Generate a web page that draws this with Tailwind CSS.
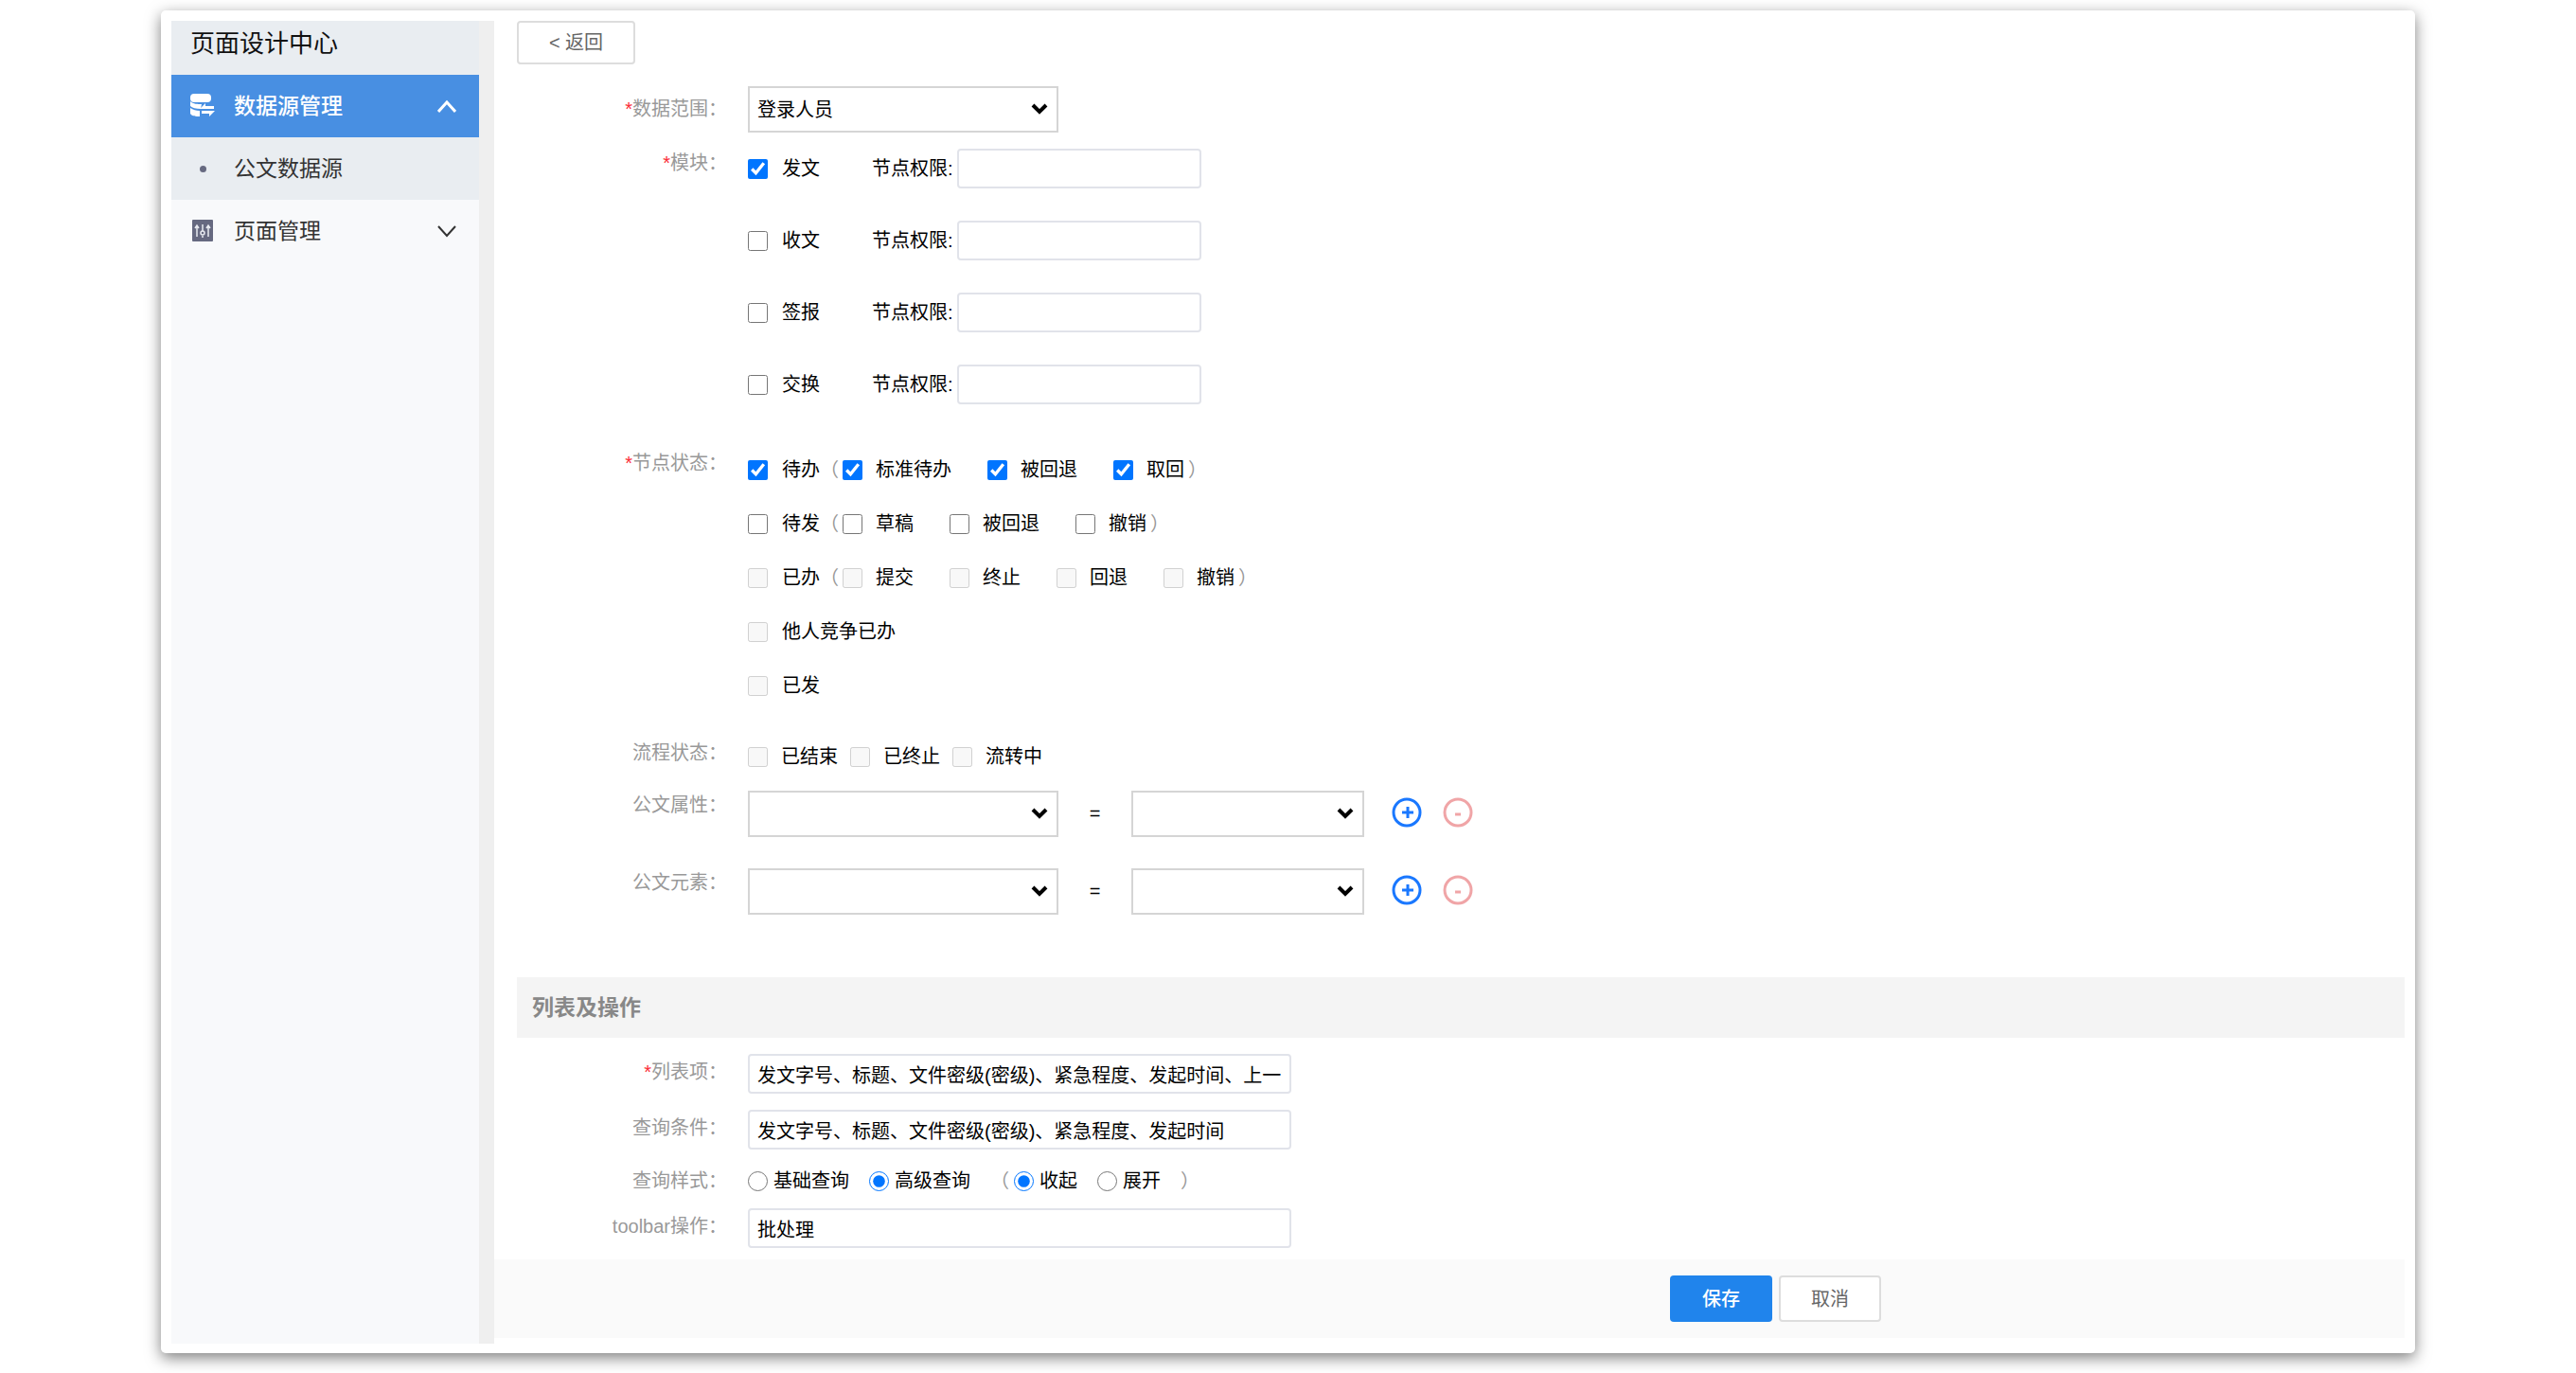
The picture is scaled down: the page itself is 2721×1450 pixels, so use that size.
<!DOCTYPE html>
<html lang="zh-CN">
<head>
    <meta charset="UTF-8">
    <meta name="viewport" content="width=device-width, initial-scale=1.0">
    <title>页面设计中心</title>
    <script src="https://cdn.jsdelivr.net/npm/@tailwindcss/browser@4"></script>
</head>
<body class="bg-white px-[170px] pt-[11px] pb-[21px] font-['Liberation_Sans','Noto_Sans_CJK_SC',sans-serif] text-[20px] leading-[30px] text-black">
    <div class="flex rounded-[5px] bg-white pt-[11px] pr-[11px] pb-[10px] pl-[11px] shadow-[0_5px_16px_rgba(0,0,0,0.5)]">

        <!-- Sidebar -->
        <aside class="w-[341px] shrink-0 border-r-[16px] border-[#efefef] bg-[#f8f9fb] text-[23px] text-[#333]">
            <h1 class="h-[57px] bg-[#e9edf1] pl-5 text-[26px] leading-[48px] text-[#111]">页面设计中心</h1>
            <nav>
                <button type="button" class="flex h-[66px] w-full items-center bg-[#488fe2] pr-6 pl-5 text-white">
                    <svg class="h-[26px] w-[26px]" viewBox="0 0 26 26" fill="currentColor">
                        <rect x="0" y="0" width="22" height="9" rx="4" />
                        <path d="M0 8c3 3 8 3 12 3l-1 5C6 16 2 15 0 13z" />
                        <path d="M0 15c3 2 6 3 10 3v6C6 24 2 24 0 21z" />
                        <path d="M11 15l5-5v3h9v3H11zM12 18h14l-6 6v-3h-8z" />
                    </svg>
                    <span class="ml-5 font-medium">数据源管理</span>
                    <svg class="ml-auto h-[20px] w-[20px]" viewBox="0 0 20 20" fill="none" stroke="currentColor" stroke-width="3">
                        <path d="M1 16l9-10 9 10" />
                    </svg>
                </button>
                <a href="#" class="flex h-[66px] items-center bg-[#e9edf1] pl-[30px]">
                    <span class="h-[7px] w-[7px] rounded-full bg-[#666980]"></span>
                    <span class="ml-[29px]">公文数据源</span>
                </a>
                <button type="button" class="flex h-[66px] w-full items-center pr-6 pl-5">
                    <svg class="h-[26px] w-[26px]" viewBox="0 0 26 26">
                        <rect x="2" y="1" width="22" height="23" rx="1" fill="#666980" />
                        <path d="M7 19V7M5 10l2-3 2 3M13 6v7M13 18v2M19 19V7M17 10l2-3 2 3" fill="none" stroke="#e8eaf0" stroke-width="1.5" />
                        <circle cx="13" cy="15" r="2" fill="none" stroke="#e8eaf0" stroke-width="1.5" />
                    </svg>
                    <span class="ml-5">页面管理</span>
                    <svg class="ml-auto h-[20px] w-[20px]" viewBox="0 0 20 20" fill="none" stroke="currentColor" stroke-width="2">
                        <path d="M1 5l9 10 9-10" />
                    </svg>
                </button>
            </nav>
        </aside>

        <form class="min-w-0 grow">
            <div class="pl-6">
                <button type="button" class="block h-[46px] w-[125px] rounded border-2 border-[#ddd] text-[#666]">&lt; 返回</button>

                <div class="mt-[23px] flex">
                    <label for="scope" class="mr-[22px] w-[222px] pt-[9px] text-right text-[#999]"><span class="text-red-500">*</span>数据范围：</label>
                    <div class="relative">
                        <select id="scope" class="block h-[49px] w-[328px] appearance-none border-2 border-[#d5d5d5] bg-white px-2">
                            <option>登录人员</option>
                        </select>
                        <svg class="pointer-events-none absolute top-[18px] right-[11px] h-[12px] w-[18px]" viewBox="0 0 18 12" fill="none" stroke="#000" stroke-width="4"><path d="M2 2l7 7 7-7" /></svg>
                    </div>
                </div>

                <div class="mt-[17px] flex">
                    <div class="mr-[22px] w-[222px] text-right text-[#999]"><span class="text-red-500">*</span>模块：</div>
                    <div class="flex flex-col gap-[34px]">
                        <div class="flex h-[42px] items-center">
                            <label class="flex items-center gap-[15px]"><input type="checkbox" checked class="h-[21px] w-[21px]">发文</label>
                            <label for="perm1" class="mr-1 ml-[55px]">节点权限:</label>
                            <input id="perm1" type="text" class="h-[42px] w-[258px] rounded border-2 border-[#e1e3ea] px-2">
                        </div>
                        <div class="flex h-[42px] items-center">
                            <label class="flex items-center gap-[15px]"><input type="checkbox" class="h-[21px] w-[21px]">收文</label>
                            <label for="perm2" class="mr-1 ml-[55px]">节点权限:</label>
                            <input id="perm2" type="text" class="h-[42px] w-[258px] rounded border-2 border-[#e1e3ea] px-2">
                        </div>
                        <div class="flex h-[42px] items-center">
                            <label class="flex items-center gap-[15px]"><input type="checkbox" class="h-[21px] w-[21px]">签报</label>
                            <label for="perm3" class="mr-1 ml-[55px]">节点权限:</label>
                            <input id="perm3" type="text" class="h-[42px] w-[258px] rounded border-2 border-[#e1e3ea] px-2">
                        </div>
                        <div class="flex h-[42px] items-center">
                            <label class="flex items-center gap-[15px]"><input type="checkbox" class="h-[21px] w-[21px]">交换</label>
                            <label for="perm4" class="mr-1 ml-[55px]">节点权限:</label>
                            <input id="perm4" type="text" class="h-[42px] w-[258px] rounded border-2 border-[#e1e3ea] px-2">
                        </div>
                    </div>
                </div>

                <div class="mt-[47px] flex">
                    <div class="mr-[22px] w-[222px] text-right text-[#999]"><span class="text-red-500">*</span>节点状态：</div>
                    <div class="flex flex-col gap-[27px] pt-[7px]">
                        <div class="flex items-center">
                            <label class="flex items-center gap-[15px]"><input type="checkbox" checked class="h-[21px] w-[21px]">待办</label>
                            <span class="mr-1 text-[#999]">（</span>
                            <div class="flex gap-[38px]">
                                <label class="flex items-center gap-[14px]"><input type="checkbox" checked class="h-[21px] w-[21px]">标准待办</label>
                                <label class="flex items-center gap-[14px]"><input type="checkbox" checked class="h-[21px] w-[21px]">被回退</label>
                                <label class="flex items-center gap-[14px]"><input type="checkbox" checked class="h-[21px] w-[21px]">取回</label>
                            </div>
                            <span class="ml-1 text-[#999]">）</span>
                        </div>
                        <div class="flex items-center">
                            <label class="flex items-center gap-[15px]"><input type="checkbox" class="h-[21px] w-[21px]">待发</label>
                            <span class="mr-1 text-[#999]">（</span>
                            <div class="flex gap-[38px]">
                                <label class="flex items-center gap-[14px]"><input type="checkbox" class="h-[21px] w-[21px]">草稿</label>
                                <label class="flex items-center gap-[14px]"><input type="checkbox" class="h-[21px] w-[21px]">被回退</label>
                                <label class="flex items-center gap-[14px]"><input type="checkbox" class="h-[21px] w-[21px]">撤销</label>
                            </div>
                            <span class="ml-1 text-[#999]">）</span>
                        </div>
                        <div class="flex items-center">
                            <label class="flex items-center gap-[15px]"><input type="checkbox" disabled class="h-[21px] w-[21px]">已办</label>
                            <span class="mr-1 text-[#999]">（</span>
                            <div class="flex gap-[38px]">
                                <label class="flex items-center gap-[14px]"><input type="checkbox" disabled class="h-[21px] w-[21px]">提交</label>
                                <label class="flex items-center gap-[14px]"><input type="checkbox" disabled class="h-[21px] w-[21px]">终止</label>
                                <label class="flex items-center gap-[14px]"><input type="checkbox" disabled class="h-[21px] w-[21px]">回退</label>
                                <label class="flex items-center gap-[14px]"><input type="checkbox" disabled class="h-[21px] w-[21px]">撤销</label>
                            </div>
                            <span class="ml-1 text-[#999]">）</span>
                        </div>
                        <label class="flex items-center gap-[15px]"><input type="checkbox" disabled class="h-[21px] w-[21px]">他人竞争已办</label>
                        <label class="flex items-center gap-[15px]"><input type="checkbox" disabled class="h-[21px] w-[21px]">已发</label>
                    </div>
                </div>

                <div class="mt-[41px] flex">
                    <div class="mr-[22px] w-[222px] text-right text-[#999]">流程状态：</div>
                    <div class="flex gap-[13px] pt-1">
                        <label class="flex items-center gap-[14px]"><input type="checkbox" disabled class="h-[21px] w-[21px]">已结束</label>
                        <label class="flex items-center gap-[14px]"><input type="checkbox" disabled class="h-[21px] w-[21px]">已终止</label>
                        <label class="flex items-center gap-[14px]"><input type="checkbox" disabled class="h-[21px] w-[21px]">流转中</label>
                    </div>
                </div>

                <div class="mt-[21px] flex">
                    <label for="attr" class="mr-[22px] w-[222px] text-right text-[#999]">公文属性：</label>
                    <div class="relative">
                        <select id="attr" class="block h-[49px] w-[328px] appearance-none border-2 border-[#d5d5d5] bg-white px-2"></select>
                        <svg class="pointer-events-none absolute top-[18px] right-[11px] h-[12px] w-[18px]" viewBox="0 0 18 12" fill="none" stroke="#000" stroke-width="4"><path d="M2 2l7 7 7-7" /></svg>
                    </div>
                    <span class="w-[77px] text-center leading-[49px]">=</span>
                    <div class="relative">
                        <select aria-label="公文属性值" class="block h-[49px] w-[246px] appearance-none border-2 border-[#d5d5d5] bg-white px-2"></select>
                        <svg class="pointer-events-none absolute top-[18px] right-[11px] h-[12px] w-[18px]" viewBox="0 0 18 12" fill="none" stroke="#000" stroke-width="4"><path d="M2 2l7 7 7-7" /></svg>
                    </div>
                    <div class="flex h-[46px] items-center gap-[22px] pl-[29px]">
                        <button type="button" aria-label="添加"><svg class="block h-[32px] w-[32px]" viewBox="0 0 32 32" fill="none" stroke="#1a78ff" stroke-width="3"><circle cx="16" cy="16" r="14" /><path d="M11 16h12M17 10v12" /></svg></button>
                        <button type="button" aria-label="删除"><svg class="block h-[32px] w-[32px]" viewBox="0 0 32 32" fill="none" stroke="#f0a5a7" stroke-width="3"><circle cx="16" cy="16" r="14" /><path d="M13 18h6" /></svg></button>
                    </div>
                </div>

                <div class="mt-[33px] flex">
                    <label for="elem" class="mr-[22px] w-[222px] text-right text-[#999]">公文元素：</label>
                    <div class="relative">
                        <select id="elem" class="block h-[49px] w-[328px] appearance-none border-2 border-[#d5d5d5] bg-white px-2"></select>
                        <svg class="pointer-events-none absolute top-[18px] right-[11px] h-[12px] w-[18px]" viewBox="0 0 18 12" fill="none" stroke="#000" stroke-width="4"><path d="M2 2l7 7 7-7" /></svg>
                    </div>
                    <span class="w-[77px] text-center leading-[49px]">=</span>
                    <div class="relative">
                        <select aria-label="公文元素值" class="block h-[49px] w-[246px] appearance-none border-2 border-[#d5d5d5] bg-white px-2"></select>
                        <svg class="pointer-events-none absolute top-[18px] right-[11px] h-[12px] w-[18px]" viewBox="0 0 18 12" fill="none" stroke="#000" stroke-width="4"><path d="M2 2l7 7 7-7" /></svg>
                    </div>
                    <div class="flex h-[46px] items-center gap-[22px] pl-[29px]">
                        <button type="button" aria-label="添加"><svg class="block h-[32px] w-[32px]" viewBox="0 0 32 32" fill="none" stroke="#1a78ff" stroke-width="3"><circle cx="16" cy="16" r="14" /><path d="M11 16h12M17 10v12" /></svg></button>
                        <button type="button" aria-label="删除"><svg class="block h-[32px] w-[32px]" viewBox="0 0 32 32" fill="none" stroke="#f0a5a7" stroke-width="3"><circle cx="16" cy="16" r="14" /><path d="M13 18h6" /></svg></button>
                    </div>
                </div>

                <!-- List and actions -->
                <h2 class="mt-[66px] h-[64px] bg-[#f4f4f4] pl-4 text-[23px] leading-[64px] font-bold text-[#888]">列表及操作</h2>

                <div class="mt-[17px] flex">
                    <label for="columns" class="mr-[22px] w-[222px] pt-1 text-right text-[#999]"><span class="text-red-500">*</span>列表项：</label>
                    <input id="columns" type="text" value="发文字号、标题、文件密级(密级)、紧急程度、发起时间、上一步处理人" class="h-[42px] w-[574px] rounded border-2 border-[#e1e3ea] px-2">
                </div>
                <div class="mt-[17px] flex">
                    <label for="query" class="mr-[22px] w-[222px] pt-1 text-right text-[#999]">查询条件：</label>
                    <input id="query" type="text" value="发文字号、标题、文件密级(密级)、紧急程度、发起时间" class="h-[42px] w-[574px] rounded border-2 border-[#e1e3ea] px-2">
                </div>
                <div class="mt-[18px] flex items-center">
                    <div class="mr-[22px] w-[222px] text-right text-[#999]">查询样式：</div>
                    <div class="flex items-center gap-[21px]">
                        <label class="flex items-center gap-1.5"><input type="radio" name="style" class="h-[21px] w-[21px]">基础查询</label>
                        <label class="flex items-center gap-1.5"><input type="radio" name="style" checked class="h-[21px] w-[21px]">高级查询</label>
                    </div>
                    <span class="mr-[5px] ml-[21px] text-[#999]">（</span>
                    <div class="flex items-center gap-[21px]">
                        <label class="flex items-center gap-1.5"><input type="radio" name="fold" checked class="h-[21px] w-[21px]">收起</label>
                        <label class="flex items-center gap-1.5"><input type="radio" name="fold" class="h-[21px] w-[21px]">展开</label>
                    </div>
                    <span class="ml-[21px] text-[#999]">）</span>
                </div>
                <div class="mt-[14px] flex">
                    <label for="toolbar" class="mr-[22px] w-[222px] pt-1 text-right text-[#999]">toolbar操作：</label>
                    <input id="toolbar" type="text" value="批处理" class="h-[42px] w-[574px] rounded border-2 border-[#e1e3ea] px-2">
                </div>
            </div>

            <div class="mt-3 mb-1.5 flex h-[83px] items-center justify-end gap-[7px] bg-[#fafafa] pr-[553px]">
                <button type="submit" class="h-[49px] w-[108px] rounded bg-[#2084ec] font-medium text-white">保存</button>
                <button type="button" class="h-[49px] w-[108px] rounded border-2 border-[#ddd] bg-white text-[#666]">取消</button>
            </div>
        </form>
    </div>
</body>
</html>
